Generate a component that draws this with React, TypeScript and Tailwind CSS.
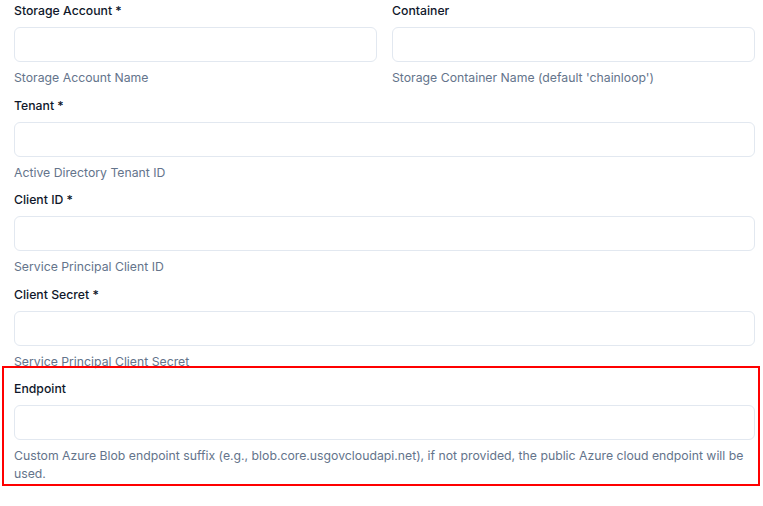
import React from "react"

type FieldProps = {
  label: string
  help: string
}

function Field({ label, help }: FieldProps) {
  return (
    <div className="flex flex-col">
      <label className="pt-px text-[12.25px] leading-[19px] font-medium text-[#0f172a]">{label}</label>
      <input
        type="text"
        className="mt-[7px] h-[35px] w-full rounded-md border border-[#e2e8f0] bg-white px-3 text-[12.25px] outline-none"
      />
      <p className="mt-[7px] text-[12.25px] leading-[18px] text-[#64748b]">{help}</p>
    </div>
  )
}

export default function App() {
  return (
    <div
      className="relative h-[506px] w-[763px] overflow-hidden bg-white pl-[14px] pr-[8px]"
      style={{ fontFamily: "Inter, 'Noto Sans', sans-serif" }}
    >
      <div className="flex flex-col gap-[7.5px]">
        <div className="grid grid-cols-2 gap-x-[15px]">
          <Field label="Storage Account *" help="Storage Account Name" />
          <Field label="Container" help="Storage Container Name (default 'chainloop')" />
        </div>
        <Field label="Tenant *" help="Active Directory Tenant ID" />
        <Field label="Client ID *" help="Service Principal Client ID" />
        <Field label="Client Secret *" help="Service Principal Client Secret" />
        <Field
          label="Endpoint"
          help="Custom Azure Blob endpoint suffix (e.g., blob.core.usgovcloudapi.net), if not provided, the public Azure cloud endpoint will be used."
        />
      </div>

      {/* highlight overlay */}
      <div className="pointer-events-none absolute left-[2px] top-[366px] h-[120px] w-[758px] border-2 border-[#ff0000]" />
    </div>
  )
}
